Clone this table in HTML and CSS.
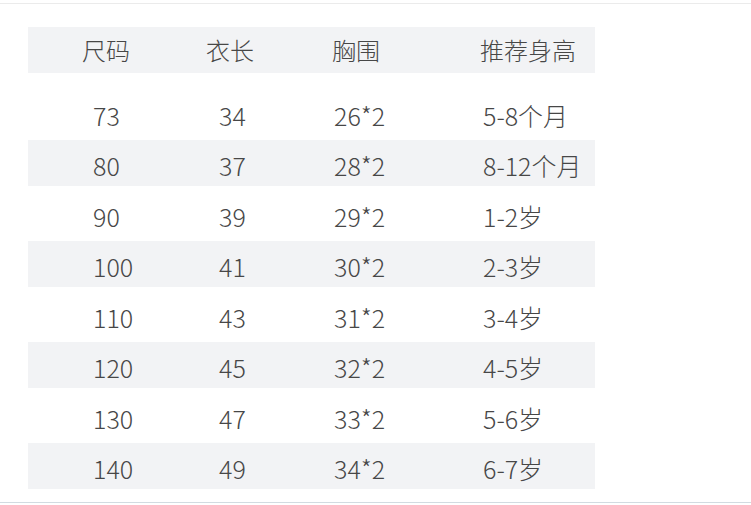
FILE: index.html
```html
<!DOCTYPE html>
<html lang="zh">
<head>
<meta charset="utf-8">
<link rel="stylesheet" href="styles.css">
</head>
<body>
<div class="page">
  <div class="topline"></div>
  <div class="table">
    <div class="row head">
      <span>尺码</span><span>衣长</span><span>胸围</span><span>推荐身高</span>
    </div>
    <div class="body">
      <div class="row"><span>73</span><span>34</span><span>26*2</span><span>5-8个月</span></div>
      <div class="row band"><span>80</span><span>37</span><span>28*2</span><span>8-12个月</span></div>
      <div class="row"><span>90</span><span>39</span><span>29*2</span><span>1-2岁</span></div>
      <div class="row band"><span>100</span><span>41</span><span>30*2</span><span>2-3岁</span></div>
      <div class="row"><span>110</span><span>43</span><span>31*2</span><span>3-4岁</span></div>
      <div class="row band"><span>120</span><span>45</span><span>32*2</span><span>4-5岁</span></div>
      <div class="row"><span>130</span><span>47</span><span>33*2</span><span>5-6岁</span></div>
      <div class="row band"><span>140</span><span>49</span><span>34*2</span><span>6-7岁</span></div>
    </div>
  </div>
  <div class="bottomline"></div>
</div>
</body>
</html>
```
FILE: styles.css
```css
html, body {
  margin: 0;
  padding: 0;
  background: #ffffff;
}
.page {
  width: 751px;
  height: 505px;
  position: relative;
  overflow: hidden;
  font-family: "Noto Sans CJK SC", "Noto Sans", sans-serif;
  font-weight: 300;
  color: #474747;
}
.topline {
  margin-top: 3px;
  height: 1px;
  background: #ebebeb;
}
.table {
  margin: 23px 0 0 28px;
  width: 567px;
}
.row {
  display: grid;
  height: 46px;
  align-items: center;
  font-size: 25px;
  line-height: 46px;
  grid-template-columns: 126px 115px 149px 1fr;
  padding-left: 65px;
  white-space: nowrap;
}
.row span {
  display: block;
  padding-top: 2px;
}
.head {
  background: #f2f3f5;
  font-size: 24px;
  grid-template-columns: 124px 126px 148px 1fr;
  padding-left: 54px;
}
.head span {
  padding-top: 0;
}
.body {
  margin-top: 16.5px;
  display: flex;
  flex-direction: column;
  gap: 4.5px;
}
.band {
  background: #f2f3f5;
}
.bottomline {
  position: absolute;
  left: 0;
  right: 0;
  top: 502px;
  height: 1px;
  background: #d2dbe1;
}
```
